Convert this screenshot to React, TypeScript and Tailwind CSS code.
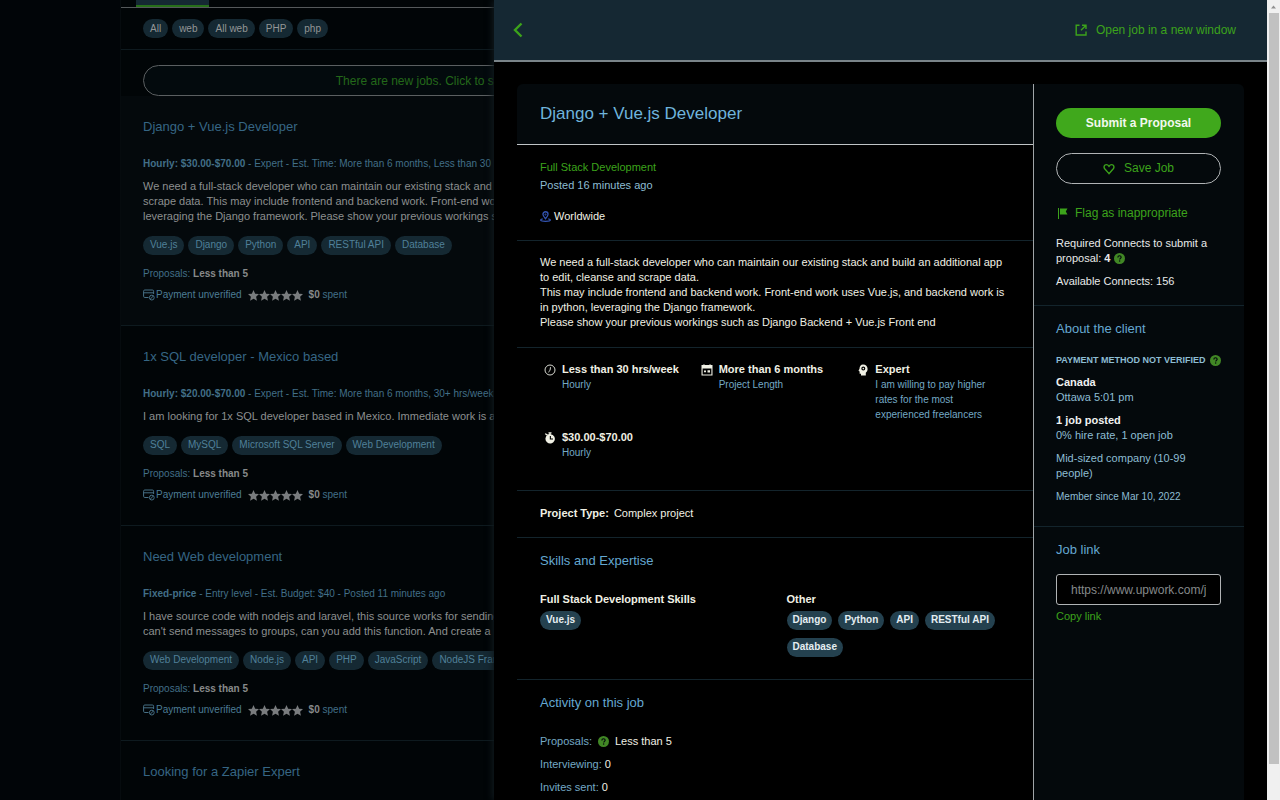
import type { ReactNode } from "react";

type Job = {
  title: string;
  terms: string;
  details: string;
  text: string[];
  skills: string[];
};

const searches = ["All", "web", "All web", "PHP", "php"];

const jobs: Job[] = [
  {
    title: "Django + Vue.js Developer",
    terms: "Hourly: $30.00-$70.00",
    details: "Expert - Est. Time: More than 6 months, Less than 30 hrs/week",
    text: [
      "We need a full-stack developer who can maintain our existing stack and build",
      "scrape data. This may include frontend and backend work. Front-end work uses",
      "leveraging the Django framework. Please show your previous workings such as",
    ],
    skills: ["Vue.js", "Django", "Python", "API", "RESTful API", "Database"],
  },
  {
    title: "1x SQL developer - Mexico based",
    terms: "Hourly: $20.00-$70.00",
    details: "Expert - Est. Time: More than 6 months, 30+ hrs/week - Posted",
    text: ["I am looking for 1x SQL developer based in Mexico. Immediate work is available"],
    skills: ["SQL", "MySQL", "Microsoft SQL Server", "Web Development"],
  },
  {
    title: "Need Web development",
    terms: "Fixed-price",
    details: "Entry level - Est. Budget: $40 - Posted 11 minutes ago",
    text: [
      "I have source code with nodejs and laravel, this source works for sending messages",
      "can't send messages to groups, can you add this function. And create a new",
    ],
    skills: ["Web Development", "Node.js", "API", "PHP", "JavaScript", "NodeJS Framework"],
  },
];

function Star() {
  return (
    <svg viewBox="0 0 24 24" className="size-[11px] fill-[#797c7e]" aria-hidden="true">
      <path d="M12 0l3.6 8 8.4.9-6.3 5.7 1.8 8.6L12 18.9l-7.5 4.3 1.8-8.6L0 8.9 8.4 8z" />
    </svg>
  );
}

function CardIcon() {
  return (
    <svg viewBox="0 0 12 12" className="mr-px size-3 fill-none stroke-[#477085]" aria-hidden="true">
      <path d="M5.500 8.500H1.800A1.200 1.200 0 01.6 7.300V2.200A1.200 1.200 0 011.800 1h7.600a1.200 1.200 0 011.200 1.200V5M.6 3.800h10" />
      <circle cx="8.800" cy="8.600" r="2.400" />
      <path d="M7.200 10.200l3.200-3.200" />
    </svg>
  );
}

function Help() {
  return (
    <svg viewBox="0 0 14 14" className="inline-block size-[11px] shrink-0 align-[-2px]" role="img" aria-label="Help">
      <circle cx="7" cy="7" r="7" fill="#418725" />
      <path d="M4.900 5.600c0-1.300.9-2.100 2.100-2.100s2.100.8 2.100 1.900c0 1.400-1.800 1.500-1.800 2.900" fill="none" stroke="#04090c" strokeWidth="1.500" />
      <circle cx="7.200" cy="10.300" r=".95" fill="#04090c" />
    </svg>
  );
}

function JobCard({ job, first }: { job: Job; first: boolean }) {
  return (
    <article className={`whitespace-nowrap border-b border-[#0e1a1f] px-[22px] pt-[21px] pb-[22px] ${first ? "bg-[#04090c]" : ""}`}>
      <h3 className="text-[13px] leading-5 text-[#366684]">{job.title}</h3>
      <p className="mt-[19px] text-[10px] leading-4 text-[#426f88]">
        <strong>{job.terms}</strong> - {job.details}
      </p>
      <div className="mt-[7px] text-[11px] leading-[15px] text-[#8c8f8f]">
        {job.text.map((line) => (
          <p key={line}>{line}</p>
        ))}
      </div>
      <ul className="mt-3 flex gap-1">
        {job.skills.map((s) => (
          <li key={s} className="h-[19px] rounded-full bg-[#152933] px-[7px] text-[10px] leading-[18px] text-[#508099]">
            {s}
          </li>
        ))}
      </ul>
      <p className="mt-[11px] text-[10px] leading-4 text-[#426f88]">
        Proposals: <strong className="text-[#878a8a]">Less than 5</strong>
      </p>
      <p className="mt-[5px] flex items-center text-[10px] leading-4 text-[#426f88]">
        <CardIcon />
        <span className="text-[#4c7c95]">Payment unverified</span>
        <span className="mx-[6px] flex">
          <Star /><Star /><Star /><Star /><Star />
        </span>
        <span><strong className="text-[#878a8a]">$0</strong> spent</span>
      </p>
    </article>
  );
}

function Feature({ icon, title, children }: { icon: ReactNode; title: string; children: ReactNode }) {
  return (
    <li className="flex gap-[6px]">
      <span className="mt-[2px] ml-1 size-3 shrink-0">{icon}</span>
      <div>
        <strong className="block text-[11px] leading-[15px] whitespace-nowrap text-[#f0f0e4]">{title}</strong>
        <span className="block text-[10px] leading-[15px] text-[#74a9c5]">{children}</span>
      </div>
    </li>
  );
}

function SkillList({ title, skills }: { title: string; skills: string[] }) {
  return (
    <div>
      <h3 className="text-[11px] leading-4 font-bold text-[#f0f0e4]">{title}</h3>
      <ul className="mt-1 flex flex-wrap gap-x-[6px] gap-y-2">
        {skills.map((s) => (
          <li key={s} className="h-[19px] rounded-full bg-[#24414f] px-[6px] text-[10px] leading-[18px] font-bold text-[#e4eef2]">
            {s}
          </li>
        ))}
      </ul>
    </div>
  );
}

function JobDetails() {
  return (
    <div className="min-w-0 flex-1 pb-4">
      <header className="rounded-tl-md border-b border-[#c0c4c6] bg-[#04090c] px-[23px] py-[18px]">
        <h1 className="text-[17px] leading-6 text-[#6fb4dc]">Django + Vue.js Developer</h1>
      </header>
      <section className="border-b border-[#13242c] px-[23px] pt-[13px] pb-[15px] text-[11px] leading-[18px]">
        <a href="#category" className="block text-[#3ca31b]">Full Stack Development</a>
        <p className="text-[#8dbdd3]">Posted 16 minutes ago</p>
        <p className="mt-[13px] flex items-center gap-[3px] text-[#f0f0e4]">
          <svg viewBox="0 0 12 12" className="size-[11px] fill-none stroke-[#3455b4] stroke-[1.4]" aria-hidden="true">
            <path d="M6 8.500C4.200 6.500 3.200 5.200 3.200 3.600a2.800 2.800 0 015.600 0C8.800 5.200 7.800 6.500 6 8.500zM3 8.600c-1.500.3-2.300.8-2.300 1.300C.7 10.700 3 11.300 6 11.300s5.300-.6 5.300-1.400c0-.5-.8-1-2.300-1.300" />
            <circle cx="6" cy="3.700" r=".4" />
          </svg>
          Worldwide
        </p>
      </section>
      <section className="border-b border-[#13242c] px-[23px] pt-[14px] pb-[17px] text-[11px] leading-[15px] text-[#f0f0e4]">
        <p>We need a full-stack developer who can maintain our existing stack and build an additional app to edit, cleanse and scrape data.</p>
        <p>This may include frontend and backend work. Front-end work uses Vue.js, and backend work is in python, leveraging the Django framework.</p>
        <p>Please show your previous workings such as Django Backend + Vue.js Front end</p>
      </section>
      <section className="border-b border-[#13242c] px-[23px] pt-[14px] pb-[30px]">
        <ul className="grid grid-cols-3 gap-y-2">
          <Feature
            title="Less than 30 hrs/week"
            icon={
              <svg viewBox="0 0 12 12" className="fill-none stroke-[#d8dad2]" aria-hidden="true">
                <circle cx="6" cy="6" r="5" />
                <path d="M6.500 3.200L6 6.500 4.300 8.200" />
              </svg>
            }
          >
            Hourly
          </Feature>
          <Feature
            title="More than 6 months"
            icon={
              <svg viewBox="0 0 12 12" fill="#f0f0e4" aria-hidden="true">
                <path fillRule="evenodd" d="M.5 1h1.700V.5h1.500V1h4.600V.5h1.500V1h1.700v10.500H.5zM1.600 4.500v5.900h8.800V4.500z" />
                <path d="M3 6.500h2v1.800H3zM6.500 6.200h2.500v2.200H6.500z" />
              </svg>
            }
          >
            Project Length
          </Feature>
          <Feature
            title="Expert"
            icon={
              <svg viewBox="0 0 12 12" fill="#f0f0e4" aria-hidden="true">
                <path fillRule="evenodd" d="M6 .5c2.800 0 4.600 2 4.600 4.500 0 1.800-.8 3-1.800 3.800v2.700H4V9.800H2.600V7.500L1.500 6.800l1-2C2.600 2.200 3.800.5 6 .5zM6.300 2.600a2 2 0 100 4 2 2 0 000-4zM6.300 3.800a.8.8 0 110 1.600.8.8 0 010-1.600z" />
              </svg>
            }
          >
            I am willing to pay higher<br />rates for the most<br />experienced freelancers
          </Feature>
          <Feature
            title="$30.00-$70.00"
            icon={
              <svg viewBox="0 0 12 12" fill="#f0f0e4" aria-hidden="true">
                <path fillRule="evenodd" d="M4.500.3h3v1.200h-.8v.7a4.700 4.700 0 11-2.900.6L2.500 3.600.8 2l.8-.8L3.800 2.500l1.500-.4v-.6h-.8zM5.800 4v3.600h3.200V6.500H6.900V4z" />
              </svg>
            }
          >
            Hourly
          </Feature>
        </ul>
      </section>
      <section className="border-b border-[#13242c] px-[23px] pt-[14px] pb-4 text-[11px] leading-4 text-[#f0f0e4]">
        <strong className="mr-[5px]">Project Type:</strong>Complex project
      </section>
      <section className="border-b border-[#13242c] px-[23px] pt-[13px] pb-[22px]">
        <h2 className="text-[13px] leading-5 text-[#64a8d1]">Skills and Expertise</h2>
        <div className="mt-5 grid grid-cols-2 gap-[23px]">
          <SkillList title="Full Stack Development Skills" skills={["Vue.js"]} />
          <SkillList title="Other" skills={["Django", "Python", "API", "RESTful API", "Database"]} />
        </div>
      </section>
      <section className="px-[23px] pt-[13px] text-[11px] leading-4 text-[#74a9c5]">
        <h2 className="text-[13px] leading-5 text-[#64a8d1]">Activity on this job</h2>
        <dl className="mt-5 flex flex-col gap-[7px]">
          <div className="flex items-center gap-[6px]">
            <dt>Proposals:</dt>
            <dd className="flex items-center gap-[6px] text-[#f0f0e4]"><Help />Less than 5</dd>
          </div>
          <div className="flex gap-[3px]">
            <dt>Interviewing:</dt>
            <dd className="text-[#f0f0e4]">0</dd>
          </div>
          <div className="flex gap-[3px]">
            <dt>Invites sent:</dt>
            <dd className="text-[#f0f0e4]">0</dd>
          </div>
        </dl>
      </section>
    </div>
  );
}

function Sidebar() {
  return (
    <aside className="w-[211px] shrink-0 rounded-tr-md border-l border-[#a0a5a8] bg-[#04090c] text-[11px] leading-[15px] text-[#8dbdd3]">
      <section className="border-b border-[#13242c] pt-6 pr-[23px] pb-4 pl-[22px] text-[#e8eaea]">
        <button type="button" className="block h-[30px] w-full rounded-full bg-[#40a81c] text-[12px] font-bold text-[#f2f8ee]">
          Submit a Proposal
        </button>
        <button type="button" className="mt-[15px] flex h-[31px] w-full items-center justify-center gap-[9px] rounded-full border border-[#b0b3b5] text-[12px] text-[#3ca31b]">
          <svg viewBox="0 0 12 12" className="size-3 fill-none stroke-[#3ca31b] stroke-[1.4]" aria-hidden="true">
            <path d="M6 10.600L1.700 5.800C.4 4.200 1.300 1.600 3.300 1.600c1.200 0 2 .6 2.700 1.700.7-1.100 1.500-1.700 2.700-1.700 2 0 2.900 2.600 1.600 4.200z" />
          </svg>
          Save Job
        </button>
        <a href="#flag" className="mt-[21px] flex items-center gap-[7px] text-[12px] leading-4 text-[#3ca31b]">
          <svg viewBox="0 0 12 12" className="size-3 fill-[#3ca31b]" aria-hidden="true">
            <path d="M2 1h1v11H2zM4 1.500h7.500L9.800 4.500l1.700 3H4z" />
          </svg>
          Flag as inappropriate
        </a>
        <p className="mt-[15px]">Required Connects to submit a proposal: <strong>4</strong> <Help /></p>
        <p className="mt-2">Available Connects: 156</p>
      </section>
      <section className="border-b border-[#13242c] px-[22px] pt-[13px] pb-[22px]">
        <h2 className="text-[13px] leading-5 text-[#64a8d1]">About the client</h2>
        <p className="mt-[14px] flex items-center gap-1 text-[9px] font-bold whitespace-nowrap">PAYMENT METHOD NOT VERIFIED <Help /></p>
        <p className="mt-[7px]"><strong className="text-[#f0f2f2]">Canada</strong><br />Ottawa 5:01 pm</p>
        <p className="mt-2"><strong className="text-[#f0f2f2]">1 job posted</strong><br />0% hire rate, 1 open job</p>
        <p className="mt-2">Mid-sized company (10-99 people)</p>
        <p className="mt-2 text-[10px]">Member since Mar 10, 2022</p>
      </section>
      <section className="pt-[13px] pr-[23px] pl-[22px]">
        <h2 className="text-[13px] leading-5 text-[#64a8d1]">
          <label htmlFor="job-link">Job link</label>
        </h2>
        <input
          id="job-link"
          readOnly
          value="https://www.upwork.com/jobs/"
          className="mt-[14px] block h-[31px] w-full rounded-[3px] border border-[#b0b3b5] bg-black px-[14px] text-[12px] text-[#85898b]"
        />
        <button type="button" className="mt-[3px] block text-[11px] leading-4 text-[#3ca31b]">Copy link</button>
      </section>
    </aside>
  );
}

export default function App() {
  return (
    <div className="relative h-screen overflow-hidden bg-[#010508] font-['Liberation_Sans',Arial,sans-serif]">
      <main className="ml-[120px] min-h-screen border-l border-[#060b0e] bg-[#010507]">
        <nav className="flex h-2 border-b border-[#55595b] pl-[15px]" aria-label="Job feeds">
          <a href="#feed" aria-label="My feed" className="h-[7px] w-[73px] border-b-2 border-[#27701a] bg-[#152933]" />
        </nav>
        <ul className="flex gap-1 border-b border-[#0e1a1f] px-[22px] pt-[11px] pb-[11px]">
          {searches.map((s) => (
            <li key={s}>
              <button type="button" className="block h-[19px] rounded-full bg-[#152933] px-[7px] text-[10px] leading-[18px] text-[#939696]">{s}</button>
            </li>
          ))}
        </ul>
        <div className="px-[22px] pt-[15px]">
          <button type="button" className="block h-[31px] w-[587px] rounded-full border border-[#5b5f61] bg-[#030a0d] text-[12px] text-[#23681a]">
            There are new jobs. Click to see them
          </button>
        </div>
        {jobs.map((job, i) => (
          <JobCard key={job.title} job={job} first={i === 0} />
        ))}
        <article className="px-[22px] pt-[21px]">
          <h3 className="text-[13px] leading-5 text-[#366684]">Looking for a Zapier Expert</h3>
        </article>
      </main>

      <div role="dialog" aria-label="Job details" className="absolute inset-y-0 right-0 left-[494px] flex bg-black shadow-[-2px_0_6px_#10191d]">
        <div className="min-w-0 flex-1 overflow-hidden">
          <header className="flex h-[62px] items-center justify-between border-b-2 border-[#7a8489] bg-[#152833] pr-[31px] pl-[19px]">
            <button type="button" aria-label="Back">
              <svg viewBox="0 0 10 16" className="h-4 w-[10px] fill-none stroke-[#3ca31b] stroke-[2.4]" aria-hidden="true">
                <path d="M8.500 1.500L2 8l6.500 6.500" />
              </svg>
            </button>
            <a href="#job" className="flex items-center gap-[9px] text-[12px] leading-4 text-[#3ca31b]">
              <svg viewBox="0 0 12 12" className="size-3 fill-none stroke-[#3ca31b] stroke-[1.4]" aria-hidden="true">
                <path d="M4.500 1.200H1.200v9.800H11V7.500M7 1.200h4V5M11 1.200L6 6.200" />
              </svg>
              Open job in a new window
            </a>
          </header>
          <div className="flex px-[23px] pt-[22px]">
            <JobDetails />
            <Sidebar />
          </div>
        </div>
        <div className="flex w-[13px] shrink-0 flex-col items-center bg-[#f0f0f0]" aria-hidden="true">
          <svg viewBox="0 0 13 13" className="size-[13px] fill-[#909090]">
            <path d="M4 8.500L6.500 5.500 9 8.500z" />
          </svg>
          <div className="mb-9 w-[10px] flex-1 bg-[#c1c1c1]" />
        </div>
      </div>
    </div>
  );
}
